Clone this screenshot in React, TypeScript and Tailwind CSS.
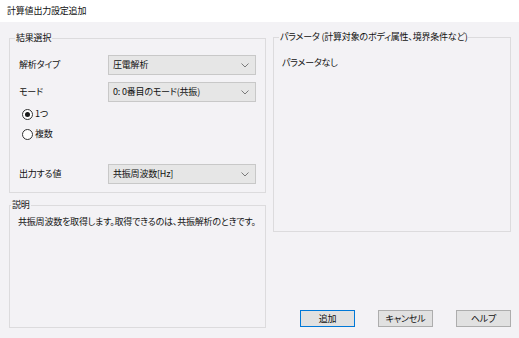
import React from 'react';

const Chevron = () => (
  <svg width="8" height="5" viewBox="0 0 8 5" className="shrink-0">
    <polyline points="0.5,0.5 4,4 7.5,0.5" fill="none" stroke="#7a7a7a" strokeWidth="1" />
  </svg>
);

const Select = ({ value }: { value: string }) => (
  <div className="w-[148px] h-[20px] border border-[#c8c8c8] bg-[#e6e6e6] flex items-center justify-between pl-[4px] pr-[6px]">
    <span>{value}</span>
    <Chevron />
  </div>
);

const Row = ({ label, value, className }: { label: string; value: string; className?: string }) => (
  <div className={`flex items-center pl-[9px] ${className ?? ''}`}>
    <span className="w-[89px]">{label}</span>
    <Select value={value} />
  </div>
);

const Radio = ({ label, checked, className }: { label: string; checked?: boolean; className?: string }) => (
  <div className={`flex items-center h-[16px] pl-[12px] gap-[2px] ${className ?? ''}`}>
    <span className="w-[11px] h-[11px] rounded-full border border-[#333333] bg-white flex items-center justify-center">
      {checked && <span className="w-[5px] h-[5px] rounded-full bg-[#1a1a1a]" />}
    </span>
    <span>{label}</span>
  </div>
);

const Button = ({ label, focused }: { label: string; focused?: boolean }) => (
  <button
    className={`w-[55px] h-[17px] flex items-center justify-center bg-[#e1e1e1] border ${
      focused ? 'border-[#0078d7]' : 'border-[#adadad]'
    }`}
  >
    {label}
  </button>
);

export default function App() {
  return (
    <div className="w-[519px] h-[338px] bg-[#f3f2f5] flex flex-col text-[9px] leading-[16px] tracking-[-0.2px] text-[#111111] whitespace-nowrap font-['Noto_Sans_CJK_JP',sans-serif] [font-feature-settings:'palt']">
      <div className="h-[22px] shrink-0 bg-white flex items-center pl-[7px]">計算値出力設定追加</div>

      <div className="flex flex-1 pl-[9px] pt-[8px]">
        {/* left column */}
        <div className="w-[257px] flex flex-col">
          <fieldset className="h-[163px] border border-[#dcdbdd]">
            <legend className="ml-[5px] px-[1px]">結果選択</legend>
            <Row label="解析タイプ" value="圧電解析" className="mt-[9px]" />
            <Row label="モード" value="0: 0番目のモード(共振)" className="mt-[7px]" />
            <Radio label="1つ" checked className="mt-[4px]" />
            <Radio label="複数" className="mt-[4px]" />
            <Row label="出力する値" value="共振周波数[Hz]" className="mt-[22px]" />
          </fieldset>

          <fieldset className="mt-[4px] h-[131px] border border-[#dcdbdd]">
            <legend className="ml-[1px] px-[1px]">説明</legend>
            <p className="mt-[1px] pl-[8px]">共振周波数を取得します。取得できるのは、共振解析のときです。</p>
          </fieldset>
        </div>

        {/* right column */}
        <div className="ml-[7px] w-[238px] flex flex-col">
          <fieldset className="-mt-[1px] h-[203px] border border-[#dcdbdd]">
            <legend className="ml-[5px] px-[1px]">パラメータ (計算対象のボディ属性、境界条件など)</legend>
            <p className="mt-[10px] pl-[8px]">パラメータなし</p>
          </fieldset>

          <div className="mt-auto mb-[11px] flex justify-end gap-[23px]">
            <Button label="追加" focused />
            <Button label="キャンセル" />
            <Button label="ヘルプ" />
          </div>
        </div>
      </div>
    </div>
  );
}
